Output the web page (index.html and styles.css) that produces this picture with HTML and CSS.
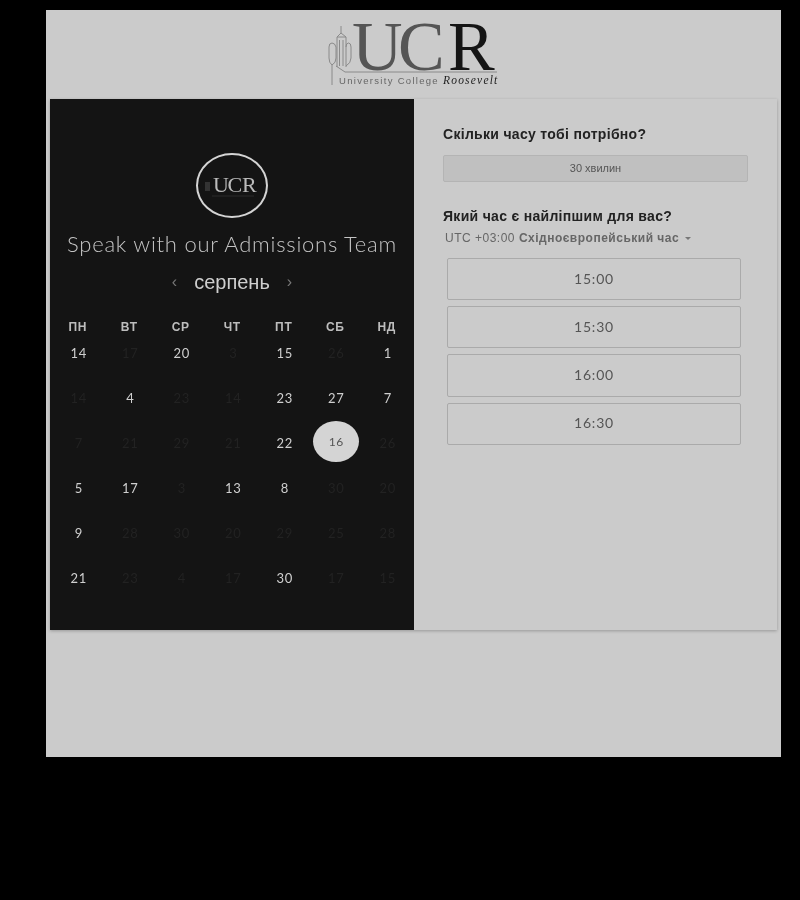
FILE: index.html
```html
<!DOCTYPE html>
<html lang="uk">
<head>
  <meta charset="UTF-8">
  <meta name="viewport" content="width=device-width, initial-scale=1.0">
  <title>UCR</title>
  <link rel="stylesheet" href="styles.css">
</head>
<body>
  <main class="page">
    <header class="brand">
      <svg class="brand-logo" width="172" height="89" viewBox="327 10 172 89">
        <g fill="none" stroke="#8a8a8a" stroke-width="1">
          <path d="M341 26V33L337 37V67M341 33L346 37V67M337 37H346M339.500 40V66M343 40V66"/>
          <path d="M332 85V65Q329 63 329 58V47Q329 43 332 43T336 47V58Q336 63 332 65"/>
          <path d="M346 66Q351 63 351 58V47Q351 43 348.500 43T346 47"/>
          <path d="M336 66L345 72H497"/>
        </g>
        <text class="logo-big" x="352 398 448" y="70"><tspan class="logo-grey">UC</tspan><tspan class="logo-dark">R</tspan></text>
        <text class="logo-line" x="339" y="84">University College</text>
        <text class="logo-sign" x="443" y="84">Roosevelt</text>
      </svg>
    </header>

    <section class="card">
      <div class="calendar">
        <div class="avatar">
          <svg width="56" height="28" viewBox="0 0 56 28">
            <rect x="1" y="10" width="5" height="9" fill="#333"/>
            <text class="logo-small" x="9 23.500 38" y="20">UCR</text>
            <path d="M8 24H50" stroke="#2a2a2a"/>
          </svg>
        </div>
        <h1 class="title">Speak with our Admissions Team</h1>
        <div class="month">
          <span class="arrow">‹</span>
          <span class="month-name">серпень</span>
          <span class="arrow">›</span>
        </div>
        <div class="weekdays">
          <b>ПН</b><b>ВТ</b><b>СР</b><b>ЧТ</b><b>ПТ</b><b>СБ</b><b>НД</b>
        </div>
        <div class="days">
          <span>14</span><span class="off">17</span><span>20</span><span class="off">3</span><span>15</span><span class="off">26</span><span>1</span>
          <span class="off">14</span><span>4</span><span class="off">23</span><span class="off">14</span><span>23</span><span>27</span><span>7</span>
          <span class="off">7</span><span class="off">21</span><span class="off">29</span><span class="off">21</span><span>22</span><span class="selected">16</span><span class="off">26</span>
          <span>5</span><span>17</span><span class="off">3</span><span>13</span><span>8</span><span class="off">30</span><span class="off">20</span>
          <span>9</span><span class="off">28</span><span class="off">30</span><span class="off">20</span><span class="off">29</span><span class="off">25</span><span class="off">28</span>
          <span>21</span><span class="off">23</span><span class="off">4</span><span class="off">17</span><span>30</span><span class="off">17</span><span class="off">15</span>
        </div>
      </div>

      <div class="booking">
        <h2 class="question">Скільки часу тобі потрібно?</h2>
        <div class="duration">30 хвилин</div>
        <h2 class="question question-time">Який час є найліпшим для вас?</h2>
        <div class="timezone">UTC +03:00 <b>Східноєвропейський час</b><i class="caret"></i></div>
        <div class="slots">
          <button class="slot">15:00</button>
          <button class="slot">15:30</button>
          <button class="slot">16:00</button>
          <button class="slot">16:30</button>
        </div>
      </div>
    </section>
  </main>
</body>
</html>
```

FILE: styles.css
```css
body {
  margin: 0;
  min-height: 900px;
  box-sizing: border-box;
  padding: 10px 0 0 46px;
  background: #000;
  font-family: "Liberation Sans", Arial, sans-serif;
}
.page {
  width: 735px;
  height: 747px;
  box-sizing: border-box;
  padding: 0 4px;
  background: #cbcbcb;
  filter: blur(0.4px);
}
.brand {
  display: flex;
  justify-content: center;
  height: 89px;
  padding-right: 1px;
  box-sizing: border-box;
}
.brand-logo {
  overflow: visible;
}
.logo-big {
  font-family: "Liberation Serif", serif;
  font-size: 70px;
}
.logo-grey {
  fill: #555;
}
.logo-dark {
  fill: #151515;
}
.logo-line {
  font-size: 9.500px;
  letter-spacing: 1.3px;
  fill: #666;
}
.logo-sign {
  font-family: "Liberation Serif", serif;
  font-style: italic;
  font-size: 11.500px;
  letter-spacing: 1.2px;
  fill: #222;
}
.card {
  display: flex;
  height: 531px;
  box-shadow: 0 1px 3px rgba(0, 0, 0, 0.25);
}
.calendar {
  width: 364px;
  box-sizing: border-box;
  padding-top: 54px;
  background: #141414;
  color: #d0d0d0;
  text-align: center;
}
.avatar {
  display: flex;
  align-items: center;
  justify-content: center;
  width: 72px;
  height: 65px;
  margin: 0 auto;
  box-sizing: border-box;
  border: 2px solid #d4d4d4;
  border-radius: 50%;
}
.logo-small {
  font-family: "Liberation Serif", serif;
  font-size: 22px;
  fill: #bbb;
}
.title {
  margin: 14px 0 0;
  font-family: Lato, sans-serif;
  font-size: 22px;
  font-weight: 300;
  line-height: 24px;
  letter-spacing: 0.75px;
  color: #c4c4c4;
}
.month {
  display: flex;
  align-items: center;
  justify-content: center;
  gap: 17px;
  height: 26px;
  margin-top: 13px;
}
.month-name {
  font-size: 20px;
  color: #cfcfcf;
}
.arrow {
  font-size: 16px;
  color: #777;
}
.weekdays,
.days {
  display: grid;
  grid-template-columns: repeat(7, 51.5px);
  padding-left: 2px;
}
.weekdays {
  margin-top: 24px;
  font-size: 12px;
  line-height: 16px;
  letter-spacing: 0.7px;
  color: #bdbdbd;
}
.days {
  grid-auto-rows: 45px;
  margin-top: -5px;
  padding-left: 3px;
  font-family: Lato, sans-serif;
  font-size: 13px;
  letter-spacing: 0.6px;
  color: #cfcfcf;
}
.days span {
  display: flex;
  align-items: center;
  justify-content: center;
}
.days .off {
  color: #222;
}
.days .selected {
  width: 46px;
  height: 41px;
  margin: 1px auto 3px;
  border-radius: 50%;
  background: #d4d4d4;
  color: #555;
  font-size: 12px;
}
.booking {
  flex: 1;
  padding: 27px 29px 0;
  background: #cbcbcb;
}
.question {
  margin: 0;
  font-size: 14px;
  line-height: 16px;
  font-weight: bold;
  letter-spacing: 0.3px;
  color: #222;
}
.duration {
  width: 305px;
  height: 27px;
  margin-top: 13px;
  box-sizing: border-box;
  border: 1px solid #b4b4b4;
  border-radius: 2px;
  background: #c0c0c0;
  font-size: 11px;
  line-height: 25px;
  text-align: center;
  color: #555;
}
.question-time {
  margin-top: 26px;
}
.timezone {
  margin: 6px 0 0 2px;
  font-size: 12px;
  line-height: 16px;
  letter-spacing: 0.5px;
  color: #666;
}
.caret {
  display: inline-block;
  margin-left: 6px;
  vertical-align: middle;
  border: 3px solid transparent;
  border-top-color: #777;
  border-bottom: 0;
}
.slots {
  display: flex;
  flex-direction: column;
  gap: 5.900px;
  width: 294px;
  margin: 12px 0 0 4px;
}
.slot {
  height: 42.300px;
  padding-bottom: 3px;
  border: 1px solid #aaa;
  border-radius: 2px;
  background: transparent;
  font-family: Lato, sans-serif;
  font-size: 14px;
  letter-spacing: 0.8px;
  color: #555;
}
```
